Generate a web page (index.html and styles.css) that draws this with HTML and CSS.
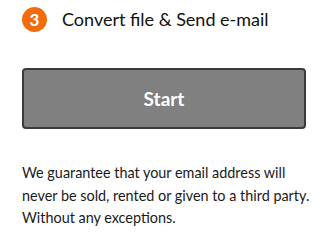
FILE: index.html
```html
<!DOCTYPE html>
<html>
<head>
<meta charset="utf-8">
<link rel="stylesheet" href="styles.css">
</head>
<body>
<div class="step">
  <div class="step-head">
    <span class="num">3</span>
    <span class="title">Convert file &amp; Send e-mail</span>
  </div>
  <button class="start">Start</button>
  <p class="note">We guarantee that your email address will never be sold, rented or given to a third party. Without any exceptions.</p>
</div>
</body>
</html>
```
FILE: styles.css
```css
html, body { margin: 0; padding: 0; background: #fff; }
body { font-family: Lato, "Open Sans", sans-serif; color: #1a1a1a; }
.step { padding: 7px 10px 0 22px; }
.step-head { display: flex; align-items: center; gap: 15px; height: 24px; }
.num {
  width: 25px; height: 25px; border-radius: 50%;
  background: #f06c0d; color: #fff;
  font-weight: 700; font-size: 17px;
  display: flex; align-items: center; justify-content: center;
  flex: none;
}
.title { font-size: 18px; color: #111; }
.start {
  display: block; width: 284px; height: 61px;
  margin-top: 37px;
  background: #808080; color: #fff;
  border: 2px solid #3b3b3b; border-radius: 4px;
  font-family: Lato, sans-serif; font-weight: 700; font-size: 19px;
  padding: 0;
}
.note { margin: 33px 0 0; font-size: 14.4px; line-height: 22.5px; color: #1a1a1a; }
```
